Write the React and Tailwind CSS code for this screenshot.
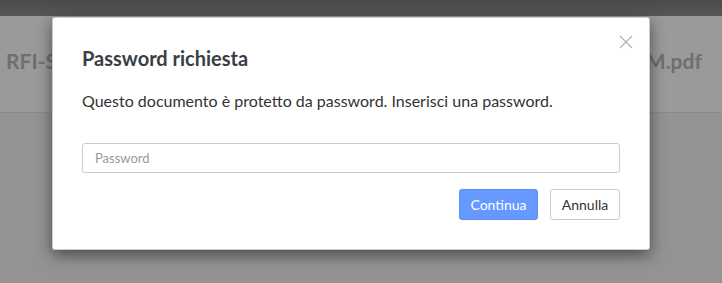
import React from "react";

export default function App() {
  return (
    <div
      className="relative w-[722px] h-[283px] overflow-hidden bg-[#939394]"
      style={{ fontFamily: "Lato, 'Noto Sans', sans-serif" }}
    >
      {/* page behind the overlay */}
      <div className="h-4 bg-gradient-to-b from-[#4a4a4a] to-[#575757]" />
      <div className="h-[97px] bg-[#9a9a9a] border-b border-[#8a8a8a] flex items-center justify-between px-[6px]">
        <span className="text-[21px] font-bold text-[#6f6f6f] pb-[6px]">RFI-SM</span>
        <span className="text-[21px] font-bold text-[#6f6f6f] pb-[6px] mr-[14px]">M.pdf</span>
      </div>

      {/* modal */}
      <div className="absolute left-[52px] top-[17px] w-[598px] h-[233px] bg-white rounded-[3px] border border-black/20 shadow-[0_5px_15px_rgba(0,0,0,0.5)] px-[29px] pt-[28px]">
        <button className="absolute right-[16px] top-[17px] w-[14px] h-[14px] text-[#b0b0b0]">
          <svg viewBox="0 0 14 14" width="14" height="14" fill="none" stroke="currentColor" strokeWidth="1.1">
            <path d="M1 1L13 13M13 1L1 13" />
          </svg>
        </button>
        <h2 className="text-[20px] leading-6 font-bold text-[#3a3e44]">Password richiesta</h2>
        <p className="mt-[19px] text-[16px] leading-6 text-[#333]">
          Questo documento è protetto da password. Inserisci una password.
        </p>
        <input
          type="password"
          placeholder="Password"
          className="mt-[30px] block w-[538px] h-[30px] border border-[#ccc] rounded-[3px] px-[12px] text-[13px] text-[#333] placeholder:text-[#999] outline-none"
        />
        <div className="mt-[16px] flex justify-end gap-[12px] w-[538px]">
          <button className="w-[79px] h-[31px] rounded-[3px] bg-[#6699ff] border border-[#5b8ef5] text-white text-[14px]">
            Continua
          </button>
          <button className="w-[70px] h-[31px] rounded-[3px] bg-white border border-[#ccc] text-[#333] text-[14px]">
            Annulla
          </button>
        </div>
      </div>
    </div>
  );
}
